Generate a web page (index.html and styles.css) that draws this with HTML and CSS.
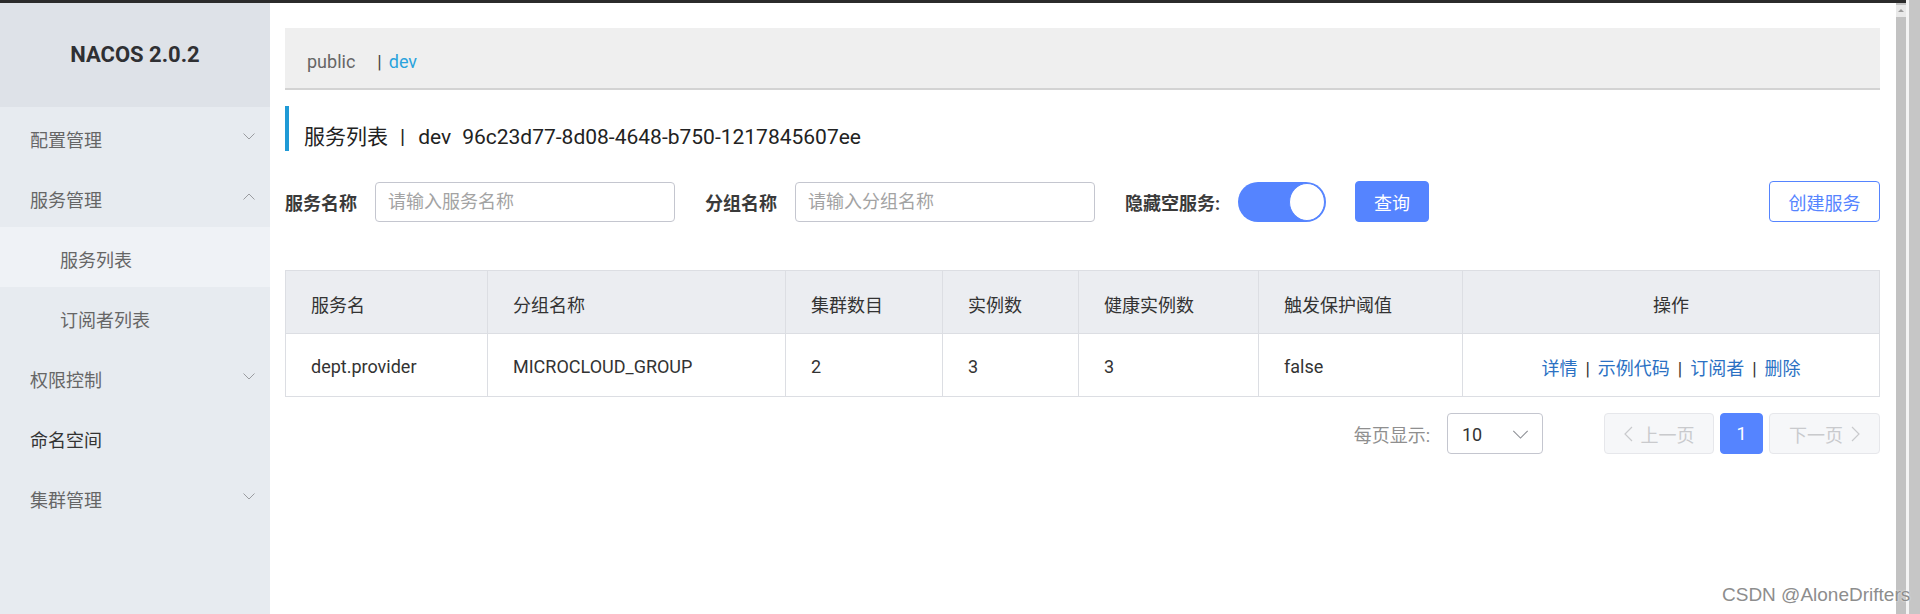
FILE: index.html
```html
<!DOCTYPE html>
<html lang="zh-CN">
<head>
<meta charset="utf-8">
<title>NACOS 2.0.2 - 服务列表</title>
<link rel="stylesheet" href="styles.css">
</head>
<body>
<div class="topline"></div>
<div class="app">
  <aside class="sidebar">
    <div class="brand">NACOS 2.0.2</div>
    <ul class="menu">
      <li class="menu-item"><span>配置管理</span>
        <svg class="chev" viewBox="0 0 12 7"><path d="M0.5 0.5 L6 6 L11.5 0.5"/></svg></li>
      <li class="menu-item"><span>服务管理</span>
        <svg class="chev" viewBox="0 0 12 7"><path d="M0.5 6.5 L6 1 L11.5 6.5"/></svg></li>
      <li class="menu-item sub active"><span>服务列表</span></li>
      <li class="menu-item sub"><span>订阅者列表</span></li>
      <li class="menu-item"><span>权限控制</span>
        <svg class="chev" viewBox="0 0 12 7"><path d="M0.5 0.5 L6 6 L11.5 0.5"/></svg></li>
      <li class="menu-item strong"><span>命名空间</span></li>
      <li class="menu-item"><span>集群管理</span>
        <svg class="chev" viewBox="0 0 12 7"><path d="M0.5 0.5 L6 6 L11.5 0.5"/></svg></li>
    </ul>
  </aside>

  <main class="content">
    <div class="ns-bar">
      <span class="ns">public</span>
      <span class="ns-sep">|</span>
      <span class="ns current">dev</span>
    </div>

    <h1 class="page-title">
      <span>服务列表</span>
      <span class="t-sep">|</span>
      <span>dev</span>
      <span class="t-id">96c23d77-8d08-4648-b750-1217845607ee</span>
    </h1>

    <div class="filters">
      <label class="f-label">服务名称</label>
      <input class="f-input" type="text" placeholder="请输入服务名称">
      <label class="f-label">分组名称</label>
      <input class="f-input" type="text" placeholder="请输入分组名称">
      <label class="f-label">隐藏空服务:</label>
      <span class="switch"><span class="knob"></span></span>
      <button class="btn btn-primary" type="button">查询</button>
      <button class="btn btn-outline push-right" type="button">创建服务</button>
    </div>

    <table class="grid">
      <colgroup>
        <col class="c1"><col class="c2"><col class="c3"><col class="c4"><col class="c5"><col class="c6"><col class="c7">
      </colgroup>
      <thead>
        <tr>
          <th>服务名</th>
          <th>分组名称</th>
          <th>集群数目</th>
          <th>实例数</th>
          <th>健康实例数</th>
          <th>触发保护阈值</th>
          <th class="center">操作</th>
        </tr>
      </thead>
      <tbody>
        <tr>
          <td>dept.provider</td>
          <td>MICROCLOUD_GROUP</td>
          <td>2</td>
          <td>3</td>
          <td>3</td>
          <td>false</td>
          <td class="center actions"><a>详情</a><span class="a-sep">|</span><a>示例代码</a><span class="a-sep">|</span><a>订阅者</a><span class="a-sep">|</span><a>删除</a></td>
        </tr>
      </tbody>
    </table>

    <div class="pager">
      <span class="pager-label">每页显示:</span>
      <div class="select">
        <span>10</span>
        <svg class="sel-chev" viewBox="0 0 18 10"><path d="M1 1 L9 9 L17 1"/></svg>
      </div>
      <button class="pg pg-disabled" type="button">
        <svg class="pg-chev" viewBox="0 0 9 16"><path d="M8 1 L1 8 L8 15"/></svg>上一页
      </button>
      <button class="pg pg-current" type="button">1</button>
      <button class="pg pg-disabled" type="button">下一页
        <svg class="pg-chev" viewBox="0 0 9 16"><path d="M1 1 L8 8 L1 15"/></svg>
      </button>
    </div>
  </main>

  <div class="scrollbar">
    <div class="sb-track"><span class="sb-arrow"></span></div>
    <div class="sb-gap"></div>
    <div class="sb-track2"></div>
  </div>
</div>
<div class="watermark">CSDN @AloneDrifters</div>
</body>
</html>
```

FILE: styles.css
```css
* { box-sizing: border-box; }

html, body {
  margin: 0;
  width: 1920px;
  height: 614px;
  overflow: hidden;
  background: #fff;
  font-family: Roboto, "Noto Sans CJK SC", sans-serif;
  color: #333;
}

.topline {
  height: 3px;
  background: #2b2b2b;
  margin-right: 12px;
}

.app {
  display: flex;
  height: 611px;
}

/* ---------- sidebar ---------- */
.sidebar {
  width: 270px;
  flex-shrink: 0;
  background: #e7ebf0;
}

.brand {
  height: 104px;
  background: #dee2e8;
  display: flex;
  align-items: center;
  justify-content: center;
  font-size: 22px;
  font-weight: 700;
  color: #2f3033;
  padding-bottom: 2px;
}

.menu {
  list-style: none;
  margin: 0;
  padding: 0;
}

.menu-item {
  height: 60px;
  display: flex;
  align-items: center;
  justify-content: space-between;
  padding: 3px 15px 0 30px;
  font-size: 18px;
  color: #666;
}

.menu-item.sub { padding-left: 60px; }
.menu-item.active { background: #eff2f6; }
.menu-item.strong { color: #333; }

.chev {
  width: 12px;
  height: 7px;
  fill: none;
  stroke: #9a9ca0;
  stroke-width: 1;
  margin-top: -4px;
}

/* ---------- content ---------- */
.content {
  flex: 1;
  padding: 25px 16px 0 15px;
  min-width: 0;
}

.ns-bar {
  height: 62px;
  background: #efefef;
  border-bottom: 2px solid #d3d3d3;
  display: flex;
  align-items: center;
  padding: 6px 0 0 22px;
  font-size: 18px;
}

.ns { color: #666; }
.ns-sep { color: #444; margin-left: 22px; }
.ns.current { color: #2aa3dd; margin-left: 7px; }

.page-title {
  margin: 16px 0 0;
  height: 45px;
  border-left: 4px solid #1f9ad6;
  display: flex;
  align-items: flex-end;
  padding: 0 0 2px 15px;
  font-size: 21px;
  line-height: 24px;
  font-weight: 400;
  color: #222;
}

.t-sep { margin: 0 13px 0 12px; }
.t-id { margin-left: 11px; }

/* ---------- filter row ---------- */
.filters {
  margin-top: 30px;
  height: 41px;
  display: flex;
  align-items: center;
}

.f-label {
  font-size: 18px;
  font-weight: 700;
  color: #3a3a3a;
  margin-right: 18px;
}

.f-input {
  width: 300px;
  height: 40px;
  border: 1px solid #c4c6cf;
  border-radius: 4px;
  padding: 0 12px;
  font: inherit;
  font-size: 18px;
  margin-right: 30px;
  outline: none;
}

.f-input::placeholder { color: #a3a3a3; }

.switch {
  position: relative;
  width: 88px;
  height: 40px;
  border-radius: 20px;
  background: #5584ff;
  margin-right: 29px;
}

.knob {
  position: absolute;
  right: 1px;
  top: 1px;
  width: 36px;
  height: 38px;
  border-radius: 50%;
  background: #fff;
  border: 1px solid #5584ff;
}

.btn {
  height: 41px;
  border-radius: 4px;
  font: inherit;
  font-size: 18px;
  cursor: pointer;
}

.btn-primary {
  width: 74px;
  background: #5584ff;
  border: 1px solid #5584ff;
  color: #fff;
}

.btn-outline {
  width: 111px;
  background: #fff;
  border: 1px solid #5584ff;
  color: #5584ff;
}

.push-right { margin-left: auto; }

/* ---------- table ---------- */
.grid {
  margin-top: 48px;
  width: 100%;
  table-layout: fixed;
  border-collapse: collapse;
  font-size: 18px;
}

.grid col.c1 { width: 202px; }
.grid col.c2 { width: 298px; }
.grid col.c3 { width: 157px; }
.grid col.c4 { width: 136px; }
.grid col.c5 { width: 180px; }
.grid col.c6 { width: 204px; }

.grid th, .grid td {
  border: 1px solid #dcdee3;
  height: 63px;
  padding: 3px 0 0 25px;
  text-align: left;
  color: #333;
  white-space: nowrap;
}

.grid th {
  background: #ebedf1;
  font-weight: 400;
}

.grid .center { text-align: center; padding-left: 0; }

.actions a { color: #2b71c3; }
.a-sep { color: #333; margin: 0 8px; }

/* ---------- pagination ---------- */
.pager {
  margin-top: 16px;
  height: 41px;
  display: flex;
  align-items: center;
  justify-content: flex-end;
  font-size: 18px;
}

.pager-label {
  color: #8f8f8f;
  margin-right: 17px;
}

.select {
  width: 96px;
  height: 41px;
  border: 1px solid #c4c6cf;
  border-radius: 4px;
  display: flex;
  align-items: center;
  justify-content: space-between;
  padding: 2px 13px 0 14px;
  color: #333;
  margin-right: 61px;
}

.sel-chev {
  width: 17px;
  height: 9px;
  fill: none;
  stroke: #8e9096;
  stroke-width: 1.2;
}

.pg {
  height: 41px;
  border-radius: 4px;
  font: inherit;
  font-size: 18px;
  display: flex;
  align-items: center;
  justify-content: center;
  gap: 8px;
  padding: 0;
}

.pg-disabled {
  width: 110px;
  background: #f6f7f9;
  border: 1px solid #e6e7eb;
  color: #c9cacd;
}

.pg-disabled + .pg-current { margin-left: 6px; }
.pg-current + .pg-disabled { margin-left: 6px; width: 111px; }

.pg-current {
  width: 43px;
  background: #5584ff;
  border: 1px solid #5584ff;
  color: #fff;
}

.pg-chev {
  width: 9px;
  height: 16px;
  fill: none;
  stroke: #c9cacd;
  stroke-width: 1.2;
}

/* ---------- window scrollbar ---------- */
.scrollbar {
  width: 24px;
  flex-shrink: 0;
  display: flex;
  margin-top: -3px;
}

.sb-track {
  width: 10px;
  background: #c2c2c2;
  position: relative;
  margin-top: 3px;
}

.sb-arrow {
  position: absolute;
  left: 0;
  top: 2px;
  width: 10px;
  height: 12px;
  background: #e9e9e9;
}

.sb-arrow::after {
  content: "";
  position: absolute;
  left: 2px;
  top: 4px;
  border-left: 3px solid transparent;
  border-right: 3px solid transparent;
  border-bottom: 3px solid #9b9b9b;
}

.sb-gap {
  width: 3px;
  background: #f4f4f4;
}

.sb-track2 {
  flex: 1;
  background: #c6c6c6;
}

/* ---------- watermark ---------- */
.watermark {
  position: absolute;
  left: 1722px;
  top: 584px;
  font-family: "Liberation Sans", sans-serif;
  font-size: 19px;
  color: #8d8d8d;
  text-shadow: 0 0 2px #fff;
  white-space: nowrap;
}
```
